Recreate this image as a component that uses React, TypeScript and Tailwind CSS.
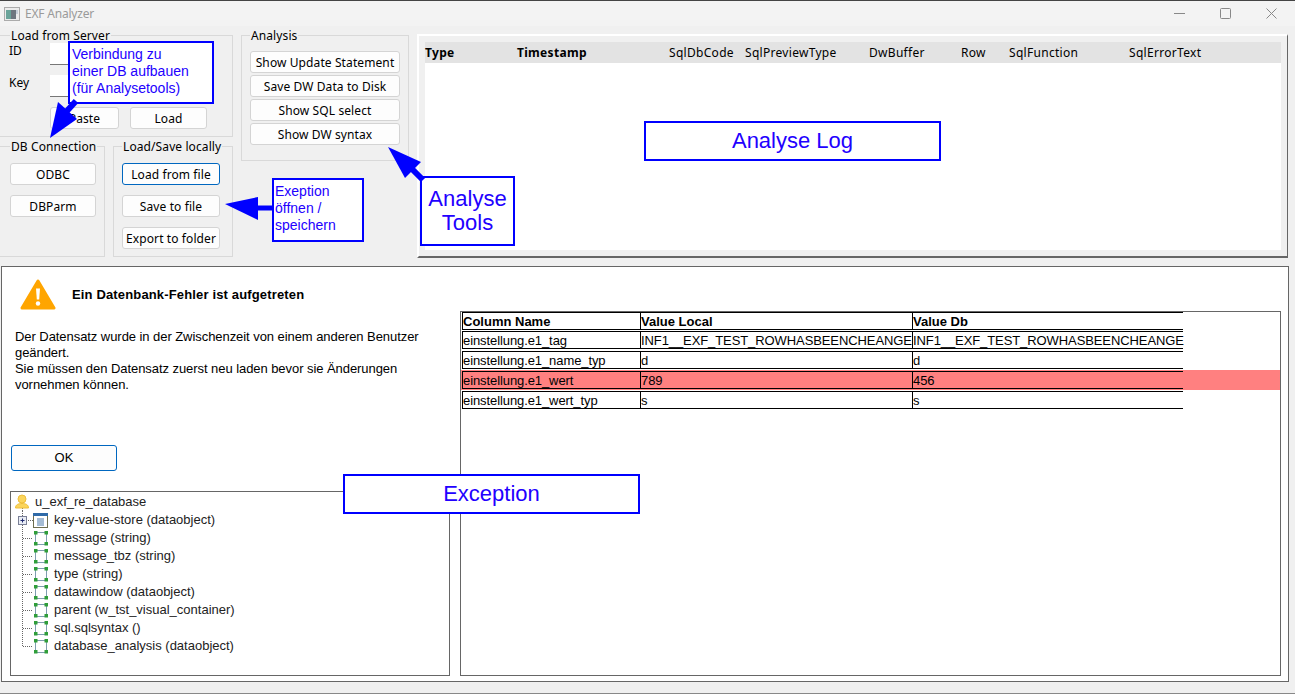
const TreeLine = ({ last }: { last?: boolean }) => (
  <>
    <path d={last ? 'M11.5 0V9' : 'M11.5 0V18'} stroke="#666" strokeDasharray="1 1" fill="none" />
    <path d="M12 9.5H22" stroke="#666" strokeDasharray="1 1" fill="none" />
  </>
)

const ObjectIcon = () => (
  <>
    <rect x="24.5" y="3.5" width="11" height="12" fill="none" stroke="#7f9db0" />
    <rect x="23" y="2" width="3.5" height="3.5" fill="#2f9e3a" />
    <rect x="33.5" y="2" width="3.5" height="3.5" fill="#2f9e3a" />
    <rect x="23" y="13" width="3.5" height="3.5" fill="#2f9e3a" />
    <rect x="33.5" y="13" width="3.5" height="3.5" fill="#2f9e3a" />
  </>
)

const TreeRow = ({ text, last, kind }: { text: string; last?: boolean; kind?: string }) => (
  <div className="flex items-center h-[18px]">
    <svg width="40" height="18" className="shrink-0">
      {kind === 'root' ? (
        <>
          <path d="M11.5 15V18" stroke="#666" strokeDasharray="1 1" fill="none" />
          <circle cx="11" cy="6" r="4" fill="#fbd55c" stroke="#eebf3c" />
          <path d="M4.5 15c0-3.5 3-4.5 6.5-4.5s6.5 1 6.5 4.5z" fill="#fbd55c" stroke="#eebf3c" />
        </>
      ) : kind === 'data' ? (
        <>
          <path d="M11.5 0V18" stroke="#666" strokeDasharray="1 1" fill="none" />
          <path d="M15 9.5H22" stroke="#666" strokeDasharray="1 1" fill="none" />
          <rect x="7.5" y="5.5" width="8" height="8" fill="#e8ecf4" stroke="#7a7f96" />
          <path d="M9.5 9.5H13.5M11.5 7.5V11.5" stroke="#1f2a70" />
          <rect x="22.5" y="2.5" width="14" height="14" fill="#fff" stroke="#6d6d4e" />
          <rect x="22" y="2" width="15" height="3" fill="#2f6aa8" />
          <path d="M26 8H33M26 10H33M26 12H33M26 14H33" stroke="#4a78a8" />
        </>
      ) : (
        <>
          <TreeLine last={last} />
          <ObjectIcon />
        </>
      )}
    </svg>
    <span className={kind === 'root' ? '-ml-[16px]' : 'ml-[3px]'}>{text}</span>
  </div>
)

const Btn = ({ text, className, active }: { text: string; className: string; active?: boolean }) => (
  <button
    className={`h-[22px] rounded-[3px] border bg-[#fdfdfd] pt-[1px] text-[12px] leading-none tracking-[0.1px] text-black ${
      active ? 'border-[#0067c0]' : 'border-[#d4d4d4]'
    } ${className}`}
  >
    {text}
  </button>
)

const Group = ({
  title,
  className,
  legendClass,
  children
}: {
  title: string
  className: string
  legendClass: string
  children: React.ReactNode
}) => (
  <fieldset className={`border border-[#d9d9d9] ${className}`}>
    <legend className={`px-[1px] pt-[1px] text-[12px] leading-[16px] tracking-[0.1px] text-black ${legendClass}`}>
      {title}
    </legend>
    {children}
  </fieldset>
)

const Note = ({ className, children }: { className: string; children: React.ReactNode }) => (
  <div className={`absolute border-2 border-[#0000ff] bg-white font-['Liberation_Sans',sans-serif] text-[#2200ff] ${className}`}>
    {children}
  </div>
)

const logColumns = [
  { name: 'SqlDbCode', width: 'w-[76px]' },
  { name: 'SqlPreviewType', width: 'w-[124px]' },
  { name: 'DwBuffer', width: 'w-[92px]' },
  { name: 'Row', width: 'w-[48px]' },
  { name: 'SqlFunction', width: 'w-[120px]' },
  { name: 'SqlErrorText', width: 'w-[90px]' }
]

const compareRows = [
  ['einstellung.e1_tag', 'INF1__EXF_TEST_ROWHASBEENCHEANGE', 'INF1__EXF_TEST_ROWHASBEENCHEANGE'],
  ['einstellung.e1_name_typ', 'd', 'd'],
  ['einstellung.e1_wert', '789', '456'],
  ['einstellung.e1_wert_typ', 's', 's']
]

const treeRows = [
  'message (string)',
  'message_tbz (string)',
  'type (string)',
  'datawindow (dataobject)',
  'parent (w_tst_visual_container)',
  'sql.sqlsyntax ()'
]

const Cells = ({ cells, bold }: { cells: string[]; bold?: boolean }) => (
  <div className={`flex h-full w-[721px] border-y border-black ${bold ? 'font-bold' : 'tracking-[-0.09px]'}`}>
    <div className="w-[178px] whitespace-nowrap border-l border-black">{cells[0]}</div>
    <div className="w-[272px] whitespace-nowrap border-l border-black">{cells[1]}</div>
    <div className="w-[271px] whitespace-nowrap border-l border-black">{cells[2]}</div>
  </div>
)

export default function App() {
  return (
    <div className="relative flex h-[694px] w-[1295px] flex-col overflow-hidden border-t border-b border-t-[#444] border-b-[#888] bg-[#f0f0f0] font-['Noto_Sans',sans-serif]">
      {/* title bar */}
      <div className="flex h-[25px] shrink-0 items-center bg-[#f3f3f3] pl-[4px] pr-[18px] text-[12px] text-[#9a9a9a]">
        <svg width="16" height="14" className="shrink-0">
          <rect x="0.5" y="0.5" width="15" height="13" fill="#ececec" stroke="#ababab" />
          <rect x="2" y="3" width="5" height="9" fill="#6aa49a" />
          <rect x="7" y="3" width="5" height="9" fill="#6f7780" />
          <rect x="12" y="3" width="2" height="4" fill="#c5ced8" />
        </svg>
        <span className="ml-[5px] tracking-[-0.2px]">EXF Analyzer</span>
        <div className="ml-auto flex items-center gap-[35px]">
          <svg width="11" height="11"><path d="M0 5.5H11" stroke="#888" /></svg>
          <svg width="11" height="11"><rect x="0.5" y="0.5" width="10" height="10" rx="1" fill="none" stroke="#888" /></svg>
          <svg width="11" height="11"><path d="M0.5 0.5L10.5 10.5M10.5 0.5L0.5 10.5" stroke="#888" /></svg>
        </div>
      </div>

      {/* top area */}
      <div className="flex h-[231px] shrink-0 items-start">
        <div className="flex w-[233px] shrink-0 flex-col gap-[1px] pt-[1px]">
          <Group title="Load from Server" legendClass="ml-[10px]" className="h-[110px] border-l-0">
            <div className="-mt-[1px] flex flex-col text-[12px] text-black">
              <div className="flex h-[22px] items-start pl-[9px]">
                <span className="-mt-[1px] w-[41px]">ID</span>
                <div className="h-[22px] w-[150px] border-b border-[#777] bg-white" />
              </div>
              <div className="mt-[10px] flex h-[22px] items-start pl-[9px]">
                <span className="-mt-[1px] w-[41px]">Key</span>
                <div className="h-[22px] w-[150px] border-b border-[#777] bg-white" />
              </div>
              <div className="mt-[10px] flex gap-[11px] pl-[50px]">
                <Btn text="Paste" className="w-[69px]" />
                <Btn text="Load" className="w-[77px]" />
              </div>
            </div>
          </Group>
          <div className="flex gap-[8px]">
            <Group title="DB Connection" legendClass="ml-[10px]" className="h-[119px] w-[105px] border-l-0">
              <div className="flex flex-col gap-[10px] pl-[10px] pt-[8px]">
                <Btn text="ODBC" className="w-[86px]" />
                <Btn text="DBParm" className="w-[86px]" />
              </div>
            </Group>
            <Group title="Load/Save locally" legendClass="ml-[8px]" className="h-[119px] w-[120px]">
              <div className="flex flex-col gap-[10px] pl-[8px] pt-[8px]">
                <Btn text="Load from file" className="w-[98px]" active />
                <Btn text="Save to file" className="w-[98px]" />
                <Btn text="Export to folder" className="w-[98px]" />
              </div>
            </Group>
          </div>
        </div>

        <Group title="Analysis" legendClass="ml-[8px]" className="ml-[8px] mt-[1px] h-[134px] w-[168px] shrink-0">
          <div className="flex flex-col gap-[2px] pl-[8px] pt-[7px]">
            <Btn text="Show Update Statement" className="w-[150px]" />
            <Btn text="Save DW Data to Disk" className="w-[150px]" />
            <Btn text="Show SQL select" className="w-[150px]" />
            <Btn text="Show DW syntax" className="w-[150px]" />
          </div>
        </Group>

        {/* log panel */}
        <div className="ml-[8px] mt-[8px] h-[224px] w-[871px] shrink-0 border-l-2 border-t-2 border-r border-b-2 border-l-white border-t-white border-r-[#666] border-b-[#666] bg-[#f0f0f0] pb-[6px] pl-[6px] pr-[6px] pt-[6px]">
          <div className="h-full bg-white">
            <div className="flex h-[21px] items-center bg-[#e3e3e3] text-[12px] tracking-[0.3px] text-black">
              <span className="w-[92px] font-bold">Type</span>
              <span className="w-[152px] font-bold">Timestamp</span>
              {logColumns.map((c) => (
                <span key={c.name} className={c.width}>{c.name}</span>
              ))}
            </div>
          </div>
        </div>
      </div>

      {/* exception panel */}
      <div className="ml-[1px] mt-[9px] flex h-[416px] w-[1288px] shrink-0 border border-[#666] bg-white">
        <div className="flex w-[458px] shrink-0 flex-col pt-[1px] font-['Liberation_Sans',sans-serif]">
          <div className="flex h-[50px] items-center pl-[18px] pt-[3px]">
            <svg width="36" height="32" viewBox="0 0 36 32">
              <path d="M18 2L34 29H2Z" fill="#ffa500" stroke="#ffa500" strokeWidth="3" strokeLinejoin="round" />
              <path d="M16 9.5h4l-.8 11h-2.4z" fill="#fff" />
              <circle cx="18" cy="24.5" r="2.2" fill="#fff" />
            </svg>
            <span className="ml-[16px] text-[13px] font-bold tracking-[0.15px] text-black">
              Ein Datenbank-Fehler ist aufgetreten
            </span>
          </div>
          <p className="mt-[11px] pl-[13px] text-[13px] leading-[16px] tracking-[-0.06px] text-black">
            Der Datensatz wurde in der Zwischenzeit von einem anderen Benutzer
            <br />
            geändert.
            <br />
            Sie müssen den Datensatz zuerst neu laden bevor sie Änderungen
            <br />
            vornehmen können.
          </p>
          <button className="ml-[9px] mt-[52px] h-[26px] w-[106px] rounded-[3px] border border-[#0067c0] bg-[#fdfdfd] text-[13px] text-black">
            OK
          </button>
          <div className="ml-[8px] mt-[20px] h-[185px] w-[440px] border border-[#666] bg-white pt-[1px] text-[13px] text-[#222]">
            <TreeRow text="u_exf_re_database" kind="root" />
            <TreeRow text="key-value-store (dataobject)" kind="data" />
            {treeRows.map((t) => (
              <TreeRow key={t} text={t} />
            ))}
            <TreeRow text="database_analysis (dataobject)" last />
          </div>
        </div>

        <div className="mt-[44px] h-[365px] w-[821px] shrink-0 border border-[#666] bg-white font-['Liberation_Sans',sans-serif] text-[13px] leading-[17px] text-black">
          <div className="h-[18px] pl-[1px]">
            <Cells cells={['Column Name', 'Value Local', 'Value Db']} bold />
          </div>
          {compareRows.map((r) => (
            <div key={r[0]} className={`h-[20px] py-[1px] pl-[1px] ${r[0] === 'einstellung.e1_wert' ? 'bg-[#ff8080]' : ''}`}>
              <Cells cells={r} />
            </div>
          ))}
        </div>
      </div>

      {/* annotations */}
      <Note className="left-[68px] top-[40px] h-[63px] w-[146px] pl-[2px] pt-[3px] text-[14px] leading-[17px]">
        Verbindung zu
        <br />
        einer DB aufbauen
        <br />
        (für Analysetools)
      </Note>
      <Note className="left-[272px] top-[177px] h-[64px] w-[92px] pl-[1px] pt-[3px] text-[14px] leading-[17px]">
        Exeption
        <br />
        öffnen /
        <br />
        speichern
      </Note>
      <Note className="left-[420px] top-[175px] flex h-[70px] w-[95px] items-center justify-center pb-[1px] text-center text-[22px] leading-[24px]">
        Analyse
        <br />
        Tools
      </Note>
      <Note className="left-[644px] top-[120px] flex h-[40px] w-[297px] items-center justify-center pb-[1px] text-[22px]">
        Analyse Log
      </Note>
      <Note className="left-[343px] top-[473px] flex h-[40px] w-[297px] items-center justify-center pb-[1px] text-[22px]">
        Exception
      </Note>
      <svg width="1295" height="694" className="pointer-events-none absolute left-0 -top-[1px]">
        <path d="M50 138L58 102L77 119Z" fill="#0000ff" />
        <path d="M66 112L76 101" stroke="#0000ff" strokeWidth="6" />
        <path d="M225 204L258 197V220Z" fill="#0000ff" />
        <path d="M255 208H272" stroke="#0000ff" strokeWidth="5" />
        <path d="M388 147L405 178L421 162Z" fill="#0000ff" />
        <path d="M410 167L423 180" stroke="#0000ff" strokeWidth="6" />
      </svg>
    </div>
  )
}
